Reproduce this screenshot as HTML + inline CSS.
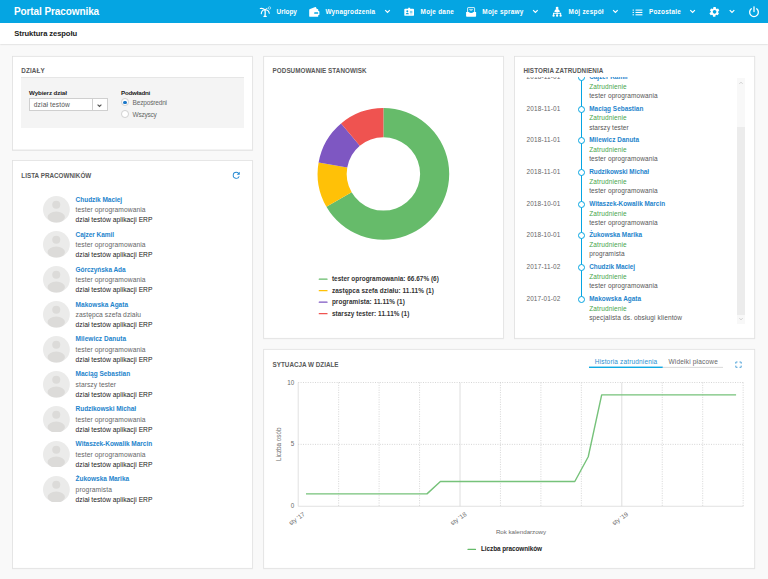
<!DOCTYPE html>
<html lang="pl"><head><meta charset="utf-8"><title>Portal Pracownika</title>
<style>
html,body{margin:0;padding:0;}
body{width:768px;height:579px;overflow:hidden;background:#f9f9f9;position:relative;font-family:"Liberation Sans",sans-serif;}
.b{position:absolute;display:block;}
.t{position:absolute;white-space:nowrap;display:block;}
</style></head><body>
<div class="b" style="left:0px;top:0px;width:768px;height:23px;background:#05a5e2;"></div>
<span class="t" style="left:13.90px;top:4.50px;font-size:10px;line-height:14.0px;color:#fff;font-weight:bold;letter-spacing:-0.088px;">Portal Pracownika</span>
<div class="b" style="left:0px;top:23px;width:768px;height:20.8px;background:#fff;box-shadow:0 0.6px 1.6px rgba(0,0,0,.16);"></div>
<span class="t" style="left:14.25px;top:28.98px;font-size:7.6px;line-height:10.64px;color:#222;font-weight:bold;letter-spacing:-0.081px;">Struktura zespołu</span>
<svg class="b" style="left:0;top:0" width="768" height="579" viewBox="0 0 768 579"><rect x="12.5" y="56.80" width="240.10" height="93.70" fill="none" stroke="rgba(0,0,0,0.05)" stroke-width="1"/><rect x="12.5" y="56.3" width="240.10" height="93.70" fill="#fff" stroke="#dfdfdf" stroke-width="0.75"/><rect x="12.5" y="161.10" width="240.10" height="407.70" fill="none" stroke="rgba(0,0,0,0.05)" stroke-width="1"/><rect x="12.5" y="160.6" width="240.10" height="407.70" fill="#fff" stroke="#dfdfdf" stroke-width="0.75"/><rect x="263.7" y="56.80" width="239.90" height="282.00" fill="none" stroke="rgba(0,0,0,0.05)" stroke-width="1"/><rect x="263.7" y="56.3" width="239.90" height="282.00" fill="#fff" stroke="#dfdfdf" stroke-width="0.75"/><rect x="514.6" y="56.80" width="240.10" height="282.00" fill="none" stroke="rgba(0,0,0,0.05)" stroke-width="1"/><rect x="514.6" y="56.3" width="240.10" height="282.00" fill="#fff" stroke="#dfdfdf" stroke-width="0.75"/><rect x="263.7" y="349.80" width="491.00" height="219.00" fill="none" stroke="rgba(0,0,0,0.05)" stroke-width="1"/><rect x="263.7" y="349.3" width="491.00" height="219.00" fill="#fff" stroke="#dfdfdf" stroke-width="0.75"/></svg>
<span class="t" style="left:21.30px;top:67.39px;font-size:6.3px;line-height:8.82px;color:#585858;font-weight:bold;letter-spacing:0.125px;">DZIAŁY</span>
<span class="t" style="left:21.30px;top:171.89px;font-size:6.3px;line-height:8.82px;color:#585858;font-weight:bold;letter-spacing:0.021px;">LISTA PRACOWNIKÓW</span>
<span class="t" style="left:272.60px;top:67.39px;font-size:6.3px;line-height:8.82px;color:#585858;font-weight:bold;letter-spacing:0.046px;">PODSUMOWANIE STANOWISK</span>
<span class="t" style="left:523.40px;top:67.19px;font-size:6.3px;line-height:8.82px;color:#585858;font-weight:bold;letter-spacing:0.082px;">HISTORIA ZATRUDNIENIA</span>
<span class="t" style="left:272.60px;top:360.79px;font-size:6.3px;line-height:8.82px;color:#585858;font-weight:bold;letter-spacing:0.005px;">SYTUACJA W DZIALE</span>
<div class="b" style="left:21.3px;top:77.3px;width:222.5px;height:51.2px;background:#f4f4f4;border-top:1.5px solid #e6e6e6;box-sizing:border-box;"></div>
<span class="t" style="left:29.00px;top:88.86px;font-size:6.2px;line-height:8.68px;color:#222;font-weight:bold;letter-spacing:-0.097px;">Wybierz dział</span>
<div class="b" style="left:29px;top:98px;width:78.6px;height:13.4px;background:#fff;border:0.6px solid #cfcfcf;box-sizing:border-box;"></div>
<div class="b" style="left:92.2px;top:98px;width:0.6px;height:13.4px;background:#cfcfcf;"></div>
<span class="t" style="left:33.80px;top:99.88px;font-size:6.6px;line-height:9.24px;color:#555;letter-spacing:0.143px;">dział testów</span>
<svg class="b" style="left:95.9px;top:103px" width="7" height="5" viewBox="0 0 7 5"><path d="M1.6 1.6 L3.5 3.5 L5.4 1.6" fill="none" stroke="#555" stroke-width="1.1"/></svg>
<span class="t" style="left:121.00px;top:88.86px;font-size:6.2px;line-height:8.68px;color:#222;font-weight:bold;letter-spacing:-0.200px;">Podwładni</span>
<div class="b" style="left:121px;top:98.4px;width:7.8px;height:7.8px;border-radius:50%;background:#fff;border:0.6px solid #d0d0d0;box-sizing:border-box;"></div>
<div class="b" style="left:123.1px;top:100.5px;width:3.6px;height:3.6px;border-radius:50%;background:#1976c8;"></div>
<div class="b" style="left:121px;top:109.9px;width:7.8px;height:7.8px;border-radius:50%;background:#fff;border:0.6px solid #d0d0d0;box-sizing:border-box;"></div>
<span class="t" style="left:132.50px;top:97.85px;font-size:6.5px;line-height:9.1px;color:#666;letter-spacing:-0.157px;">Bezpośredni</span>
<span class="t" style="left:132.50px;top:109.55px;font-size:6.5px;line-height:9.1px;color:#666;letter-spacing:-0.234px;">Wszyscy</span>
<svg class="b" style="left:231.1px;top:170.1px" width="10.5" height="10.5" viewBox="0 0 24 24"><path fill="#2388d2" d="M17.65 6.35A7.95 7.95 0 0 0 12 4a8 8 0 1 0 7.73 10h-2.08A6 6 0 1 1 12 6c1.66 0 3.14.69 4.22 1.78L13 11h7V4l-2.35 2.35z"/></svg>
<svg class="b" style="left:43.3px;top:196.00px" width="26.8" height="26.8" viewBox="0 0 100 100"><clipPath id="av0"><circle cx="50" cy="50" r="50"/></clipPath><circle cx="50" cy="50" r="50" fill="#ebebea"/><g clip-path="url(#av0)" fill="#dcdbd9"><circle cx="49.5" cy="32.6" r="15"/><ellipse cx="49.5" cy="78.5" rx="32.5" ry="20.5"/></g></svg>
<span class="t" style="left:75.60px;top:194.65px;font-size:6.5px;line-height:9.1px;color:#1e84cc;font-weight:bold;letter-spacing:-0.032px;">Chudzik Maciej</span>
<span class="t" style="left:75.60px;top:205.01px;font-size:6.7px;line-height:9.38px;color:#666;letter-spacing:0.080px;">tester oprogramowania</span>
<span class="t" style="left:75.60px;top:215.11px;font-size:6.7px;line-height:9.38px;color:#222;letter-spacing:0.026px;">dział testów aplikacji ERP</span>
<svg class="b" style="left:43.3px;top:230.95px" width="26.8" height="26.8" viewBox="0 0 100 100"><clipPath id="av1"><circle cx="50" cy="50" r="50"/></clipPath><circle cx="50" cy="50" r="50" fill="#ebebea"/><g clip-path="url(#av1)" fill="#dcdbd9"><circle cx="49.5" cy="32.6" r="15"/><ellipse cx="49.5" cy="78.5" rx="32.5" ry="20.5"/></g></svg>
<span class="t" style="left:75.60px;top:229.60px;font-size:6.5px;line-height:9.1px;color:#1e84cc;font-weight:bold;letter-spacing:-0.043px;">Cajzer Kamil</span>
<span class="t" style="left:75.60px;top:239.96px;font-size:6.7px;line-height:9.38px;color:#666;letter-spacing:0.080px;">tester oprogramowania</span>
<span class="t" style="left:75.60px;top:250.06px;font-size:6.7px;line-height:9.38px;color:#222;letter-spacing:0.026px;">dział testów aplikacji ERP</span>
<svg class="b" style="left:43.3px;top:265.90px" width="26.8" height="26.8" viewBox="0 0 100 100"><clipPath id="av2"><circle cx="50" cy="50" r="50"/></clipPath><circle cx="50" cy="50" r="50" fill="#ebebea"/><g clip-path="url(#av2)" fill="#dcdbd9"><circle cx="49.5" cy="32.6" r="15"/><ellipse cx="49.5" cy="78.5" rx="32.5" ry="20.5"/></g></svg>
<span class="t" style="left:75.60px;top:264.55px;font-size:6.5px;line-height:9.1px;color:#1e84cc;font-weight:bold;letter-spacing:-0.049px;">Górczyńska Ada</span>
<span class="t" style="left:75.60px;top:274.91px;font-size:6.7px;line-height:9.38px;color:#666;letter-spacing:0.080px;">tester oprogramowania</span>
<span class="t" style="left:75.60px;top:285.01px;font-size:6.7px;line-height:9.38px;color:#222;letter-spacing:0.026px;">dział testów aplikacji ERP</span>
<svg class="b" style="left:43.3px;top:300.85px" width="26.8" height="26.8" viewBox="0 0 100 100"><clipPath id="av3"><circle cx="50" cy="50" r="50"/></clipPath><circle cx="50" cy="50" r="50" fill="#ebebea"/><g clip-path="url(#av3)" fill="#dcdbd9"><circle cx="49.5" cy="32.6" r="15"/><ellipse cx="49.5" cy="78.5" rx="32.5" ry="20.5"/></g></svg>
<span class="t" style="left:75.60px;top:299.50px;font-size:6.5px;line-height:9.1px;color:#1e84cc;font-weight:bold;letter-spacing:0.026px;">Makowska Agata</span>
<span class="t" style="left:75.60px;top:309.86px;font-size:6.7px;line-height:9.38px;color:#666;letter-spacing:0.069px;">zastępca szefa działu</span>
<span class="t" style="left:75.60px;top:319.96px;font-size:6.7px;line-height:9.38px;color:#222;letter-spacing:0.026px;">dział testów aplikacji ERP</span>
<svg class="b" style="left:43.3px;top:335.80px" width="26.8" height="26.8" viewBox="0 0 100 100"><clipPath id="av4"><circle cx="50" cy="50" r="50"/></clipPath><circle cx="50" cy="50" r="50" fill="#ebebea"/><g clip-path="url(#av4)" fill="#dcdbd9"><circle cx="49.5" cy="32.6" r="15"/><ellipse cx="49.5" cy="78.5" rx="32.5" ry="20.5"/></g></svg>
<span class="t" style="left:75.60px;top:334.45px;font-size:6.5px;line-height:9.1px;color:#1e84cc;font-weight:bold;letter-spacing:0.020px;">Milewicz Danuta</span>
<span class="t" style="left:75.60px;top:344.81px;font-size:6.7px;line-height:9.38px;color:#666;letter-spacing:0.080px;">tester oprogramowania</span>
<span class="t" style="left:75.60px;top:354.91px;font-size:6.7px;line-height:9.38px;color:#222;letter-spacing:0.026px;">dział testów aplikacji ERP</span>
<svg class="b" style="left:43.3px;top:370.75px" width="26.8" height="26.8" viewBox="0 0 100 100"><clipPath id="av5"><circle cx="50" cy="50" r="50"/></clipPath><circle cx="50" cy="50" r="50" fill="#ebebea"/><g clip-path="url(#av5)" fill="#dcdbd9"><circle cx="49.5" cy="32.6" r="15"/><ellipse cx="49.5" cy="78.5" rx="32.5" ry="20.5"/></g></svg>
<span class="t" style="left:75.60px;top:369.40px;font-size:6.5px;line-height:9.1px;color:#1e84cc;font-weight:bold;letter-spacing:-0.003px;">Maciąg Sebastian</span>
<span class="t" style="left:75.60px;top:379.76px;font-size:6.7px;line-height:9.38px;color:#666;letter-spacing:0.048px;">starszy tester</span>
<span class="t" style="left:75.60px;top:389.86px;font-size:6.7px;line-height:9.38px;color:#222;letter-spacing:0.026px;">dział testów aplikacji ERP</span>
<svg class="b" style="left:43.3px;top:405.70px" width="26.8" height="26.8" viewBox="0 0 100 100"><clipPath id="av6"><circle cx="50" cy="50" r="50"/></clipPath><circle cx="50" cy="50" r="50" fill="#ebebea"/><g clip-path="url(#av6)" fill="#dcdbd9"><circle cx="49.5" cy="32.6" r="15"/><ellipse cx="49.5" cy="78.5" rx="32.5" ry="20.5"/></g></svg>
<span class="t" style="left:75.60px;top:404.35px;font-size:6.5px;line-height:9.1px;color:#1e84cc;font-weight:bold;letter-spacing:-0.050px;">Rudzikowski Michał</span>
<span class="t" style="left:75.60px;top:414.71px;font-size:6.7px;line-height:9.38px;color:#666;letter-spacing:0.080px;">tester oprogramowania</span>
<span class="t" style="left:75.60px;top:424.81px;font-size:6.7px;line-height:9.38px;color:#222;letter-spacing:0.026px;">dział testów aplikacji ERP</span>
<svg class="b" style="left:43.3px;top:440.65px" width="26.8" height="26.8" viewBox="0 0 100 100"><clipPath id="av7"><circle cx="50" cy="50" r="50"/></clipPath><circle cx="50" cy="50" r="50" fill="#ebebea"/><g clip-path="url(#av7)" fill="#dcdbd9"><circle cx="49.5" cy="32.6" r="15"/><ellipse cx="49.5" cy="78.5" rx="32.5" ry="20.5"/></g></svg>
<span class="t" style="left:75.60px;top:439.30px;font-size:6.5px;line-height:9.1px;color:#1e84cc;font-weight:bold;letter-spacing:-0.032px;">Witaszek-Kowalik Marcin</span>
<span class="t" style="left:75.60px;top:449.66px;font-size:6.7px;line-height:9.38px;color:#666;letter-spacing:0.080px;">tester oprogramowania</span>
<span class="t" style="left:75.60px;top:459.76px;font-size:6.7px;line-height:9.38px;color:#222;letter-spacing:0.026px;">dział testów aplikacji ERP</span>
<svg class="b" style="left:43.3px;top:475.60px" width="26.8" height="26.8" viewBox="0 0 100 100"><clipPath id="av8"><circle cx="50" cy="50" r="50"/></clipPath><circle cx="50" cy="50" r="50" fill="#ebebea"/><g clip-path="url(#av8)" fill="#dcdbd9"><circle cx="49.5" cy="32.6" r="15"/><ellipse cx="49.5" cy="78.5" rx="32.5" ry="20.5"/></g></svg>
<span class="t" style="left:75.60px;top:474.25px;font-size:6.5px;line-height:9.1px;color:#1e84cc;font-weight:bold;letter-spacing:-0.022px;">Żukowska Marika</span>
<span class="t" style="left:75.60px;top:484.61px;font-size:6.7px;line-height:9.38px;color:#666;letter-spacing:0.103px;">programista</span>
<span class="t" style="left:75.60px;top:494.71px;font-size:6.7px;line-height:9.38px;color:#222;letter-spacing:0.026px;">dział testów aplikacji ERP</span>
<svg class="b" style="left:0;top:0" width="768" height="579" viewBox="0 0 768 579"><path fill="#66bb6a" d="M383.40 108.10 A65.8 65.8 0 1 1 326.42 206.80 L351.62 192.25 A36.7 36.7 0 1 0 383.40 137.20 Z"/><path fill="#ffc107" d="M326.42 206.80 A65.8 65.8 0 0 1 318.60 162.47 L347.26 167.53 A36.7 36.7 0 0 0 351.62 192.25 Z"/><path fill="#7e57c2" d="M318.60 162.47 A65.8 65.8 0 0 1 341.10 123.49 L359.81 145.79 A36.7 36.7 0 0 0 347.26 167.53 Z"/><path fill="#ef5350" d="M341.10 123.49 A65.8 65.8 0 0 1 383.40 108.10 L383.40 137.20 A36.7 36.7 0 0 0 359.81 145.79 Z"/><line x1="319.3" x2="327" y1="279.20" y2="279.20" stroke="#66bb6a" stroke-width="1.3" stroke-linecap="round"/><line x1="319.3" x2="327" y1="290.70" y2="290.70" stroke="#ffc107" stroke-width="1.3" stroke-linecap="round"/><line x1="319.3" x2="327" y1="302.20" y2="302.20" stroke="#7e57c2" stroke-width="1.3" stroke-linecap="round"/><line x1="319.3" x2="327" y1="313.70" y2="313.70" stroke="#ef5350" stroke-width="1.3" stroke-linecap="round"/></svg>
<span class="t" style="left:331.90px;top:275.22px;font-size:6.4px;line-height:8.96px;color:#333;font-weight:bold;letter-spacing:0.034px;">tester oprogramowania: 66.67% (6)</span>
<span class="t" style="left:331.90px;top:286.77px;font-size:6.4px;line-height:8.96px;color:#333;font-weight:bold;letter-spacing:0.090px;">zastępca szefa działu: 11.11% (1)</span>
<span class="t" style="left:331.90px;top:298.32px;font-size:6.4px;line-height:8.96px;color:#333;font-weight:bold;letter-spacing:0.070px;">programista: 11.11% (1)</span>
<span class="t" style="left:331.90px;top:309.87px;font-size:6.4px;line-height:8.96px;color:#333;font-weight:bold;letter-spacing:0.070px;">starszy tester: 11.11% (1)</span>
<div class="b" style="left:520px;top:76.8px;width:226px;height:248px;overflow:hidden;">
<div class="b" style="left:61.10000000000002px;top:0;width:1.2px;height:222.7px;background:#05a5e2;"></div>
<span class="t" style="left:6.50px;top:-3.88px;font-size:6.4px;line-height:8.96px;color:#666;letter-spacing:0.174px;">2018-11-01</span>
<div class="b" style="left:58.200000000000045px;top:-2.90px;width:7px;height:7px;border-radius:50%;background:#fff;border:1.35px solid #05a5e2;box-sizing:border-box;"></div>
<span class="t" style="left:69.20px;top:-3.88px;font-size:6.4px;line-height:8.96px;color:#1e84cc;font-weight:bold;letter-spacing:0.007px;">Cajzer Kamil</span>
<span class="t" style="left:69.20px;top:4.95px;font-size:6.5px;line-height:9.1px;color:#46a54a;letter-spacing:0.114px;">Zatrudnienie</span>
<span class="t" style="left:69.20px;top:14.05px;font-size:6.5px;line-height:9.1px;color:#555;letter-spacing:0.096px;">tester oprogramowania</span>
<span class="t" style="left:6.50px;top:27.82px;font-size:6.4px;line-height:8.96px;color:#666;letter-spacing:0.174px;">2018-11-01</span>
<div class="b" style="left:58.200000000000045px;top:28.80px;width:7px;height:7px;border-radius:50%;background:#fff;border:1.35px solid #05a5e2;box-sizing:border-box;"></div>
<span class="t" style="left:69.20px;top:27.82px;font-size:6.4px;line-height:8.96px;color:#1e84cc;font-weight:bold;letter-spacing:0.031px;">Maciąg Sebastian</span>
<span class="t" style="left:69.20px;top:36.65px;font-size:6.5px;line-height:9.1px;color:#46a54a;letter-spacing:0.114px;">Zatrudnienie</span>
<span class="t" style="left:69.20px;top:45.75px;font-size:6.5px;line-height:9.1px;color:#555;letter-spacing:0.061px;">starszy tester</span>
<span class="t" style="left:6.50px;top:59.52px;font-size:6.4px;line-height:8.96px;color:#666;letter-spacing:0.174px;">2018-11-01</span>
<div class="b" style="left:58.200000000000045px;top:60.50px;width:7px;height:7px;border-radius:50%;background:#fff;border:1.35px solid #05a5e2;box-sizing:border-box;"></div>
<span class="t" style="left:69.20px;top:59.52px;font-size:6.4px;line-height:8.96px;color:#1e84cc;font-weight:bold;letter-spacing:0.038px;">Milewicz Danuta</span>
<span class="t" style="left:69.20px;top:68.35px;font-size:6.5px;line-height:9.1px;color:#46a54a;letter-spacing:0.114px;">Zatrudnienie</span>
<span class="t" style="left:69.20px;top:77.45px;font-size:6.5px;line-height:9.1px;color:#555;letter-spacing:0.096px;">tester oprogramowania</span>
<span class="t" style="left:6.50px;top:91.22px;font-size:6.4px;line-height:8.96px;color:#666;letter-spacing:0.174px;">2018-11-01</span>
<div class="b" style="left:58.200000000000045px;top:92.20px;width:7px;height:7px;border-radius:50%;background:#fff;border:1.35px solid #05a5e2;box-sizing:border-box;"></div>
<span class="t" style="left:69.20px;top:91.22px;font-size:6.4px;line-height:8.96px;color:#1e84cc;font-weight:bold;letter-spacing:-0.025px;">Rudzikowski Michał</span>
<span class="t" style="left:69.20px;top:100.05px;font-size:6.5px;line-height:9.1px;color:#46a54a;letter-spacing:0.114px;">Zatrudnienie</span>
<span class="t" style="left:69.20px;top:109.15px;font-size:6.5px;line-height:9.1px;color:#555;letter-spacing:0.096px;">tester oprogramowania</span>
<span class="t" style="left:6.50px;top:122.92px;font-size:6.4px;line-height:8.96px;color:#666;letter-spacing:0.127px;">2018-10-01</span>
<div class="b" style="left:58.200000000000045px;top:123.90px;width:7px;height:7px;border-radius:50%;background:#fff;border:1.35px solid #05a5e2;box-sizing:border-box;"></div>
<span class="t" style="left:69.20px;top:122.92px;font-size:6.4px;line-height:8.96px;color:#1e84cc;font-weight:bold;letter-spacing:-0.002px;">Witaszek-Kowalik Marcin</span>
<span class="t" style="left:69.20px;top:131.75px;font-size:6.5px;line-height:9.1px;color:#46a54a;letter-spacing:0.114px;">Zatrudnienie</span>
<span class="t" style="left:69.20px;top:140.85px;font-size:6.5px;line-height:9.1px;color:#555;letter-spacing:0.096px;">tester oprogramowania</span>
<span class="t" style="left:6.50px;top:154.62px;font-size:6.4px;line-height:8.96px;color:#666;letter-spacing:0.127px;">2018-10-01</span>
<div class="b" style="left:58.200000000000045px;top:155.60px;width:7px;height:7px;border-radius:50%;background:#fff;border:1.35px solid #05a5e2;box-sizing:border-box;"></div>
<span class="t" style="left:69.20px;top:154.62px;font-size:6.4px;line-height:8.96px;color:#1e84cc;font-weight:bold;letter-spacing:0.000px;">Żukowska Marika</span>
<span class="t" style="left:69.20px;top:163.45px;font-size:6.5px;line-height:9.1px;color:#46a54a;letter-spacing:0.114px;">Zatrudnienie</span>
<span class="t" style="left:69.20px;top:172.55px;font-size:6.5px;line-height:9.1px;color:#555;letter-spacing:0.108px;">programista</span>
<span class="t" style="left:6.50px;top:186.32px;font-size:6.4px;line-height:8.96px;color:#666;letter-spacing:0.174px;">2017-11-02</span>
<div class="b" style="left:58.200000000000045px;top:187.30px;width:7px;height:7px;border-radius:50%;background:#fff;border:1.35px solid #05a5e2;box-sizing:border-box;"></div>
<span class="t" style="left:69.20px;top:186.32px;font-size:6.4px;line-height:8.96px;color:#1e84cc;font-weight:bold;letter-spacing:-0.016px;">Chudzik Maciej</span>
<span class="t" style="left:69.20px;top:195.15px;font-size:6.5px;line-height:9.1px;color:#46a54a;letter-spacing:0.114px;">Zatrudnienie</span>
<span class="t" style="left:69.20px;top:204.25px;font-size:6.5px;line-height:9.1px;color:#555;letter-spacing:0.096px;">tester oprogramowania</span>
<span class="t" style="left:6.50px;top:218.02px;font-size:6.4px;line-height:8.96px;color:#666;letter-spacing:0.127px;">2017-01-02</span>
<div class="b" style="left:58.200000000000045px;top:219.00px;width:7px;height:7px;border-radius:50%;background:#fff;border:1.35px solid #05a5e2;box-sizing:border-box;"></div>
<span class="t" style="left:69.20px;top:218.02px;font-size:6.4px;line-height:8.96px;color:#1e84cc;font-weight:bold;letter-spacing:0.048px;">Makowska Agata</span>
<span class="t" style="left:69.20px;top:226.85px;font-size:6.5px;line-height:9.1px;color:#46a54a;letter-spacing:0.114px;">Zatrudnienie</span>
<span class="t" style="left:69.20px;top:235.95px;font-size:6.5px;line-height:9.1px;color:#555;letter-spacing:0.140px;">specjalista ds. obsługi klientów</span>
</div>
<div class="b" style="left:737.2px;top:78px;width:8px;height:245.8px;background:#f8f8f8;"></div>
<div class="b" style="left:737.2px;top:127px;width:8px;height:187.7px;background:#ececec;"></div>
<svg class="b" style="left:737.2px;top:78px" width="8" height="246" viewBox="0 0 8 246"><path d="M2.4 5.8 L4 4.2 L5.6 5.8" fill="none" stroke="#bbb" stroke-width="0.7"/><path d="M2.4 240.2 L4 241.8 L5.6 240.2" fill="none" stroke="#bbb" stroke-width="0.7"/></svg>
<svg class="b" style="left:0;top:0" width="768" height="579" viewBox="0 0 768 579"><line x1="298.2" x2="743.5" y1="382.5" y2="382.5" stroke="#c4c4c4" stroke-width="0.7" stroke-dasharray="1 1.4"/><line x1="298.2" x2="743.5" y1="444.375" y2="444.375" stroke="#c4c4c4" stroke-width="0.7" stroke-dasharray="1 1.4"/><line x1="338.65" x2="338.65" y1="382.5" y2="506.25" stroke="#c4c4c4" stroke-width="0.7" stroke-dasharray="1 1.4"/><line x1="379.10" x2="379.10" y1="382.5" y2="506.25" stroke="#c4c4c4" stroke-width="0.7" stroke-dasharray="1 1.4"/><line x1="419.55" x2="419.55" y1="382.5" y2="506.25" stroke="#c4c4c4" stroke-width="0.7" stroke-dasharray="1 1.4"/><line x1="460.00" x2="460.00" y1="382.5" y2="506.25" stroke="#d6d6d6" stroke-width="0.8"/><line x1="500.45" x2="500.45" y1="382.5" y2="506.25" stroke="#c4c4c4" stroke-width="0.7" stroke-dasharray="1 1.4"/><line x1="540.90" x2="540.90" y1="382.5" y2="506.25" stroke="#c4c4c4" stroke-width="0.7" stroke-dasharray="1 1.4"/><line x1="581.35" x2="581.35" y1="382.5" y2="506.25" stroke="#c4c4c4" stroke-width="0.7" stroke-dasharray="1 1.4"/><line x1="621.80" x2="621.80" y1="382.5" y2="506.25" stroke="#d6d6d6" stroke-width="0.8"/><line x1="662.25" x2="662.25" y1="382.5" y2="506.25" stroke="#c4c4c4" stroke-width="0.7" stroke-dasharray="1 1.4"/><line x1="702.70" x2="702.70" y1="382.5" y2="506.25" stroke="#c4c4c4" stroke-width="0.7" stroke-dasharray="1 1.4"/><line x1="743.15" x2="743.15" y1="382.5" y2="506.25" stroke="#c4c4c4" stroke-width="0.7" stroke-dasharray="1 1.4"/><line x1="298.2" x2="298.2" y1="382.5" y2="506.25" stroke="#d4d4d4" stroke-width="0.7"/><line x1="298.2" x2="743.5" y1="506.25" y2="506.25" stroke="#d4d4d4" stroke-width="0.7"/><path d="M306.00 493.88 L426.96 493.88 L440.40 481.50 L574.80 481.50 L588.24 456.75 L601.68 394.88 L736.08 394.88" fill="none" stroke="#76c27a" stroke-width="1.4" stroke-linejoin="round"/><line x1="468" x2="475.5" y1="549.4" y2="549.4" stroke="#66bb6a" stroke-width="1.2" stroke-linecap="round"/><rect x="589" y="366.6" width="73.8" height="1.35" fill="#05a5e2"/><rect x="662.8" y="366.9" width="60.2" height="0.8" fill="#d0d0d0"/><g fill="none" stroke="#2b8fd0" stroke-width="0.8"><path d="M735.8 363.7 V362 H737.5"/><path d="M739.5 362 H741.2 V363.7"/><path d="M741.2 365.6 V367.3 H739.5"/><path d="M737.5 367.3 H735.8 V365.6"/></g><text x="294.2" y="384.5" text-anchor="end" style="font-family:'Liberation Sans',sans-serif;font-size:6.3px;fill:#6a6a6a">10</text><text x="294.2" y="446.2" text-anchor="end" style="font-family:'Liberation Sans',sans-serif;font-size:6.3px;fill:#6a6a6a">5</text><text x="294.2" y="507.9" text-anchor="end" style="font-family:'Liberation Sans',sans-serif;font-size:6.3px;fill:#6a6a6a">0</text><text transform="translate(280.8 444.3) rotate(-90)" text-anchor="middle" style="font-family:'Liberation Sans',sans-serif;font-size:6.3px;fill:#6a6a6a">Liczba osób</text><text transform="translate(305.5 515.2) rotate(-35)" text-anchor="end" style="font-family:'Liberation Sans',sans-serif;font-size:6.3px;fill:#6a6a6a">sty '17</text><text transform="translate(467.1 515.2) rotate(-35)" text-anchor="end" style="font-family:'Liberation Sans',sans-serif;font-size:6.3px;fill:#6a6a6a">sty '18</text><text transform="translate(628.7 515.2) rotate(-35)" text-anchor="end" style="font-family:'Liberation Sans',sans-serif;font-size:6.3px;fill:#6a6a6a">sty '19</text></svg>
<span class="t" style="left:594.80px;top:357.45px;font-size:6.5px;line-height:9.1px;color:#2b8fd0;letter-spacing:0.155px;">Historia zatrudnienia</span>
<span class="t" style="left:668.50px;top:357.45px;font-size:6.5px;line-height:9.1px;color:#666;letter-spacing:0.193px;">Widełki płacowe</span>
<span class="t" style="left:495.90px;top:527.96px;font-size:6.2px;line-height:8.68px;color:#6a6a6a;letter-spacing:-0.022px;">Rok kalendarzowy</span>
<span class="t" style="left:481.00px;top:545.32px;font-size:6.4px;line-height:8.96px;color:#222;font-weight:bold;letter-spacing:-0.068px;">Liczba pracowników</span>
<svg class="b" style="left:0;top:0" width="768" height="23" viewBox="0 0 768 23"><g fill="none" stroke="#fff" stroke-width="1.1" stroke-linecap="round"><path d="M265 9.9 C265.3 12 265.2 14.4 265 16.2" stroke-width="1.3"/><path d="M264.9 9.7 C263.4 8.4 261.8 8.1 260.3 8.5"/><path d="M264.8 9.8 C262.8 9.9 261.5 11.4 261.3 13.6"/><path d="M265.2 9.8 C267.4 9.9 268.9 11.2 269.3 13.3"/><path d="M265.2 9.6 C265.8 9 266.4 8.6 267 8.5" stroke-width="0.9"/><path d="M264 16.4 H266.2" stroke-width="1.2"/></g><circle cx="269.5" cy="8" r="1.2" fill="none" stroke="#fff" stroke-width="0.65" opacity="0.85"/><path fill="#fff" d="M310.1 9.1 L315.3 6.9 Q315.8 6.8 316 7.3 L316.8 9.1 H317.4 Q318.3 9.1 318.3 10 V11 H318.7 Q319.4 11 319.4 11.7 V14.4 Q319.4 15.1 318.7 15.1 H318.3 V15.95 Q318.3 16.85 317.4 16.85 H310.1 Q309.2 16.85 309.2 15.95 V10 Q309.2 9.1 310.1 9.1 Z"/><rect x="314.2" y="12.25" width="4" height="1.6" rx="0.4" fill="#05a5e2"/><path fill="#fff" d="M405.2 8.7 H408.2 V7.8 H410.1 V8.7 H413.1 Q414 8.7 414 9.6 V14.9 Q414 15.8 413.1 15.8 H405.2 Q404.3 15.8 404.3 14.9 V9.6 Q404.3 8.7 405.2 8.7 Z"/><circle cx="407.3" cy="11.3" r="1" fill="#05a5e2"/><path fill="#05a5e2" d="M405.7 14.3 Q405.7 12.8 407.3 12.8 Q408.9 12.8 408.9 14.3 Z"/><rect x="409.9" y="10.9" width="2.5" height="0.8" fill="#05a5e2" opacity="0.75"/><rect x="409.9" y="12.2" width="2.5" height="0.8" fill="#05a5e2" opacity="0.6"/><rect x="409.9" y="13.5" width="2.5" height="0.8" fill="#05a5e2" opacity="0.45"/><path fill="none" stroke="#fff" stroke-width="0.85" d="M467.6 12.6 V8.1 Q467.6 7.6 468.1 7.6 H474.1 Q474.6 7.6 474.6 8.1 V12.6"/><rect x="469.2" y="9.05" width="3.7" height="0.7" fill="#fff" opacity="0.9"/><rect x="469.9" y="10.05" width="2.3" height="0.6" fill="#fff" opacity="0.8"/><path fill="#fff" d="M466.1 12 L468.6 12 Q471.1 14 473.6 12 L476.1 12 V16.1 Q476.1 16.85 475.4 16.85 H466.8 Q466.1 16.85 466.1 16.1 Z"/><g fill="#fff"><circle cx="557.1" cy="8.1" r="1.4"/><path d="M554.4 12 Q554.6 9.1 557.1 9.1 Q559.6 9.1 559.8 12 Z"/><rect x="556.7" y="11.8" width="0.8" height="1.5"/><rect x="553.1" y="12.8" width="8" height="1"/><rect x="553.1" y="12.9" width="1" height="2"/><rect x="556.6" y="12.9" width="1" height="2"/><rect x="560.1" y="12.9" width="1" height="2"/><circle cx="553.6" cy="15.7" r="1.15"/><circle cx="557.1" cy="15.7" r="1.15"/><circle cx="560.6" cy="15.7" r="1.15"/></g><rect x="632.6" y="9.55" width="1.3" height="1.1" fill="#fff"/><rect x="635.5" y="9.55" width="6.9" height="1.1" fill="#fff"/><rect x="632.6" y="11.9" width="1.3" height="1.1" fill="#fff"/><rect x="635.5" y="11.9" width="6.9" height="1.1" fill="#fff"/><rect x="632.6" y="14.25" width="1.3" height="1.1" fill="#fff"/><rect x="635.5" y="14.25" width="6.9" height="1.1" fill="#fff"/><g transform="translate(708.6 5.85) scale(0.5)"><path fill="#fff" d="M19.140 12.940c.04-.3.060-.61.060-.940 0-.32-.02-.64-.070-.940l2.030-1.580a.49.49 0 0 0 .12-.61l-1.920-3.320a.488.488 0 0 0-.590-.22l-2.390.96c-.5-.38-1.030-.7-1.620-.940l-.36-2.540a.484.484 0 0 0-.48-.41h-3.840c-.24 0-.43.170-.47.410l-.36 2.540c-.59.240-1.130.57-1.620.940l-2.390-.96c-.22-.08-.47 0-.59.220L2.740 8.870c-.12.210-.08.470.12.610l2.030 1.580c-.5.300-.9.630-.9.940s.2.640.07.940l-2.030 1.580a.49.49 0 0 0-.12.610l1.920 3.320c.12.220.37.290.59.220l2.390-.96c.5.380 1.030.7 1.620.94l.36 2.540c.5.240.24.410.48.410h3.840c.24 0 .44-.17.470-.41l.36-2.540c.59-.24 1.130-.56 1.620-.94l2.390.96c.22.080.47 0 .59-.22l1.920-3.320c.12-.22.070-.47-.12-.61l-2.010-1.580zM12 15.600c-1.980 0-3.600-1.620-3.600-3.600s1.620-3.600 3.600-3.600 3.600 1.620 3.600 3.600-1.620 3.600-3.600 3.600z"/></g><g fill="none" stroke="#fff" stroke-width="1.3" stroke-linecap="round"><path d="M751.3 8.8 A4.35 4.35 0 1 0 756.7 8.8"/><path d="M754 6.8 V11.6"/></g><path d="M385.2 10.2 L387.5 12.5 L389.8 10.2" fill="none" stroke="#fff" stroke-width="1.2"/><path d="M533.1 10.2 L535.4 12.5 L537.6999999999999 10.2" fill="none" stroke="#fff" stroke-width="1.2"/><path d="M613.1 10.2 L615.4 12.5 L617.6999999999999 10.2" fill="none" stroke="#fff" stroke-width="1.2"/><path d="M690.3000000000001 10.2 L692.6 12.5 L694.9 10.2" fill="none" stroke="#fff" stroke-width="1.2"/><path d="M729.7 10.2 L732 12.5 L734.3 10.2" fill="none" stroke="#fff" stroke-width="1.2"/></svg>
<span class="t" style="left:276.60px;top:8.02px;font-size:6.4px;line-height:8.96px;color:#fff;font-weight:bold;letter-spacing:0.005px;">Urlopy</span>
<span class="t" style="left:325.40px;top:8.02px;font-size:6.4px;line-height:8.96px;color:#fff;font-weight:bold;letter-spacing:0.217px;">Wynagrodzenia</span>
<span class="t" style="left:420.60px;top:8.02px;font-size:6.4px;line-height:8.96px;color:#fff;font-weight:bold;letter-spacing:0.257px;">Moje dane</span>
<span class="t" style="left:482.30px;top:8.02px;font-size:6.4px;line-height:8.96px;color:#fff;font-weight:bold;letter-spacing:0.263px;">Moje sprawy</span>
<span class="t" style="left:568.60px;top:8.02px;font-size:6.4px;line-height:8.96px;color:#fff;font-weight:bold;letter-spacing:0.259px;">Mój zespół</span>
<span class="t" style="left:648.90px;top:8.02px;font-size:6.4px;line-height:8.96px;color:#fff;font-weight:bold;letter-spacing:0.259px;">Pozostale</span>
</body></html>
